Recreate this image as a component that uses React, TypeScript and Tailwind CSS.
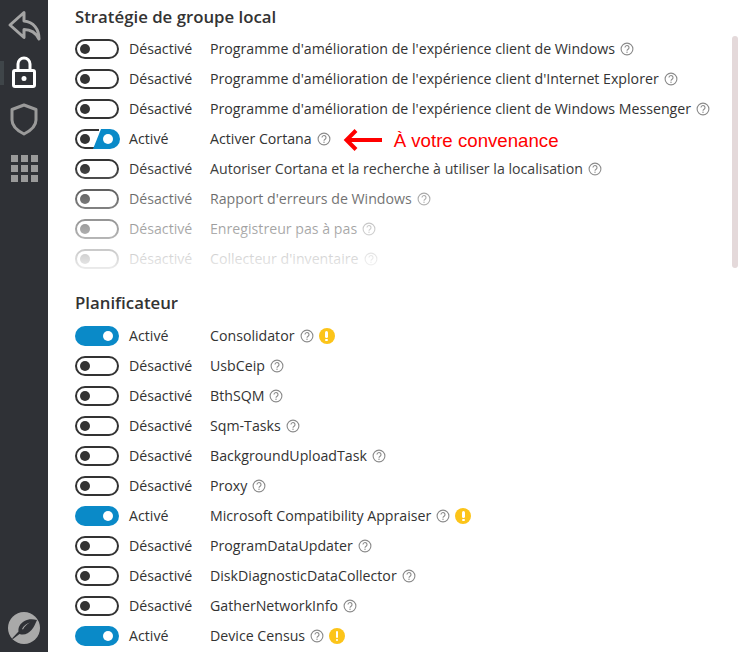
import React from "react";

type Item = { name: string; on?: boolean; warn?: boolean; half?: boolean; note?: string };

const policy: Item[] = [
  { name: "Programme d'amélioration de l'expérience client de Windows" },
  { name: "Programme d'amélioration de l'expérience client d'Internet Explorer" },
  { name: "Programme d'amélioration de l'expérience client de Windows Messenger" },
  { name: "Activer Cortana", half: true, note: "À votre convenance" },
  { name: "Autoriser Cortana et la recherche à utiliser la localisation" },
  { name: "Rapport d'erreurs de Windows" },
  { name: "Enregistreur pas à pas" },
  { name: "Collecteur d'inventaire" },
];

const tasks: Item[] = [
  { name: "Consolidator", on: true, warn: true },
  { name: "UsbCeip" },
  { name: "BthSQM" },
  { name: "Sqm-Tasks" },
  { name: "BackgroundUploadTask" },
  { name: "Proxy" },
  { name: "Microsoft Compatibility Appraiser", on: true, warn: true },
  { name: "ProgramDataUpdater" },
  { name: "DiskDiagnosticDataCollector" },
  { name: "GatherNetworkInfo" },
  { name: "Device Census", on: true, warn: true },
];

const Toggle = ({ on, half }: { on?: boolean; half?: boolean }) => {
  if (half) {
    return (
      <svg width="46" height="20" viewBox="0 0 46 20" className="-ml-px w-[46px] shrink-0">
        <path d="M25 1H11a9 9 0 0 0 0 18h9" fill="none" stroke="#333" strokeWidth="2" />
        <circle cx="11" cy="10" r="5" fill="#333" />
        <path d="M27 0h9a10 10 0 0 1 0 20H19z" fill="#0a8ac8" />
        <circle cx="34" cy="10" r="5" fill="#fff" />
      </svg>
    );
  }
  if (on) {
    return (
      <div className="flex h-5 w-11 shrink-0 items-center justify-end rounded-full bg-[#0a8ac8] pr-[6px]">
        <div className="h-[10px] w-[10px] rounded-full bg-white" />
      </div>
    );
  }
  return (
    <div className="flex h-5 w-11 shrink-0 items-center rounded-full border-2 border-[#333] pl-[3px]">
      <div className="h-[10px] w-[10px] rounded-full bg-[#333]" />
    </div>
  );
};

const Help = () => (
  <svg width="14" height="14" viewBox="0 0 14 14" className="ml-[5px] shrink-0" fill="none" stroke="#8a8a8a">
    <circle cx="7" cy="7" r="5.9" strokeWidth="1.1" />
    <path d="M5 5.6a2 2 0 1 1 3.1 1.6c-.7.5-1.1.8-1.1 1.500" strokeWidth="1.1" />
    <circle cx="7" cy="10.300" r=".7" fill="#8a8a8a" stroke="none" />
  </svg>
);

const Warn = () => (
  <div className="ml-[5px] flex h-4 w-4 shrink-0 flex-col items-center justify-center gap-[1px] rounded-full bg-[#fcc419]">
    <div className="h-[7px] w-[2.5px] rounded-sm bg-white" />
    <div className="h-[2.5px] w-[2.5px] rounded-full bg-white" />
  </div>
);

const Row = ({ item }: { item: Item }) => {
  const active = item.on || item.half;
  return (
    <div className="flex h-[30px] items-center whitespace-nowrap text-[14.18px] text-[#333]">
      <Toggle on={item.on} half={item.half} />
      <span className={item.half ? "mb-[1px] ml-[9px] w-[81px]" : "mb-[1px] ml-[10px] w-[81px]"}>{active ? "Activé" : "Désactivé"}</span>
      <span className="mb-[1px]">{item.name}</span>
      <Help />
      {item.warn && <Warn />}
      {item.note && (
        <>
          <svg width="40" height="24" viewBox="0 0 40 24" className="mt-[1px] ml-[12px] shrink-0" fill="none" stroke="#ff0000" strokeWidth="4">
            <path d="M39 12H4" />
            <path d="M13 2.500 3.500 12l9.500 9.500" />
          </svg>
          <span className="mt-[3px] ml-[11px] font-['Liberation_Sans',sans-serif] text-[18.67px] text-[#ff0000]">{item.note}</span>
        </>
      )}
    </div>
  );
};

const Sidebar = () => (
  <aside className="flex h-full w-12 shrink-0 flex-col items-center bg-[#2f3136]">
    <svg width="34" height="32" viewBox="0 0 34 32" className="mt-[10px]" fill="none" stroke="#a4a4a4" strokeWidth="3" strokeLinejoin="round">
      <path d="M17 2.500 3 15l14 12.500v-8c6.500 0 11.500 2.500 15 9.500 0-10-5.500-17-15-18z" />
    </svg>
    <div className="relative mt-[14px] flex w-full justify-center">
      <div className="absolute left-0 top-[5px] h-6 w-1 bg-[#3f4549]" />
      <svg width="26" height="32" viewBox="0 0 26 32" fill="none" stroke="#fff" strokeWidth="3">
        <path d="M7 15V8a6 6 0 0 1 12 0v7" />
        <rect x="2.500" y="14.500" width="21" height="16" rx="1.500" />
        <circle cx="13" cy="22.500" r="2.500" fill="#fff" stroke="none" />
      </svg>
    </div>
    <svg width="28" height="33" viewBox="0 0 28 33" className="mt-[15px]" fill="none" stroke="#9a9a9a" strokeWidth="3" strokeLinejoin="round">
      <path d="M14 2 2 6.500V17c0 6 5 10.500 12 14 7-3.500 12-8 12-14V6.500z" />
    </svg>
    <div className="mt-[19px] grid grid-cols-3 gap-[3px]">
      {Array.from({ length: 9 }).map((_, i) => (
        <div key={i} className="h-[7px] w-[7px] bg-[#9a9a9a]" />
      ))}
    </div>
    <div className="mt-auto mb-2 flex h-8 w-8 items-center justify-center rounded-full bg-[#a9a9a9]">
      <svg width="32" height="32" viewBox="0 0 32 32" fill="#2f3136">
        <path d="M29 8C24 6.500 20 7 16.500 9 12 11.500 10 15.500 10.500 19.500L4 26.500 5 27l6.500-5c5 1.500 9-.5 12-4 2.500-3 4-6.500 5.500-10z" />
        <path d="M14 17c1.500-3 4.500-5.500 8-6.500-3 1.500-5.500 4-7 7z" fill="#a9a9a9" />
      </svg>
    </div>
  </aside>
);

export default function App() {
  return (
    <div className="flex h-[652px] w-[742px] overflow-hidden bg-white font-['Open_Sans',sans-serif]">
      <Sidebar />
      <main className="relative flex-1 pl-[27px]">
        <h2 className="mt-[6px] h-[28px] text-[16.8px] leading-[22px] font-semibold text-[#333]">Stratégie de groupe local</h2>
        <div className="relative">
          {policy.map((item) => (
            <Row key={item.name} item={item} />
          ))}
          <div className="absolute bottom-0 left-0 right-0 h-[110px] bg-gradient-to-b from-white/0 to-white/95" />
        </div>
        <h2 className="mt-[18px] h-[29px] text-[16.8px] leading-[22px] font-semibold text-[#333]">Planificateur</h2>
        <div>
          {tasks.map((item) => (
            <Row key={item.name} item={item} />
          ))}
        </div>
        <div className="absolute right-1 top-9 h-[232px] w-[6px] rounded-full bg-[#e4d9da]" />
      </main>
    </div>
  );
}
